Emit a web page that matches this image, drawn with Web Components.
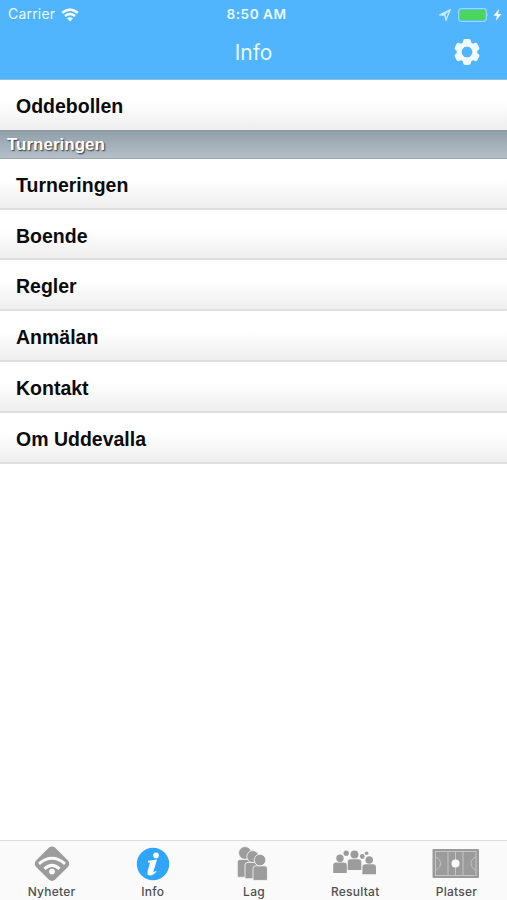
<!DOCTYPE html>
<html lang="sv">
<head>
<meta charset="utf-8">
<title>Info</title>
<style>
  html, body { margin: 0; height: 100%; background: #fff; overflow: hidden; }
</style>
</head>
<body>
<info-app></info-app>
<script>
(function() {

  /**
   * StatusBar component
   */
  class StatusBar extends HTMLElement {

    connectedCallback() {
      const html = `
        <style>
          :host { display: grid; grid-template-columns: 1fr auto 1fr; align-items: center; height: 27px; padding: 0 5px 0 8px; box-sizing: border-box; font: 500 13.2px/29px Inter, sans-serif; color: #e9f9ff; }
          .left, .right { display: flex; align-items: center; height: 27px; }
          .carrier { font-weight: 400; font-size: 13.9px; letter-spacing: 0.25px; }
          .time { font-weight: 600; font-size: 13.6px; letter-spacing: 0.5px; padding-left: 3px; }
          .right { justify-content: flex-end; }
          svg { display: block; }
          .wifi { margin-left: 6px; }
          .arrow { margin-right: 7px; }
          .bolt { margin-left: 4px; }
        </style>
        <div class="left">
          <span class="carrier">Carrier</span>
          <svg class="wifi" width="18" height="14" viewBox="0 0 18 14" fill="none" stroke="#f4fcff" stroke-width="2.5">
            <path d="M1.2 4.8Q9-1.6 16.8 4.8M4 8Q9 3.9 14 8"/>
            <path d="M6 10.3Q9 8.1 12 10.3L9 13.4Z" fill="#f4fcff" stroke="none"/>
          </svg>
        </div>
        <span class="time">8:50 AM</span>
        <div class="right">
          <svg class="arrow" width="12" height="12" viewBox="0 0 12 12">
            <path d="M11 1L1 5.8L5.8 6.2L7 11Z" fill="none" stroke="#c6eaff" stroke-width="1.4"/>
            <path d="M11 1L1 5.8L5.8 6.2Z" fill="#c6eaff"/>
          </svg>
          <svg width="31" height="14" viewBox="0 0 31 14">
            <rect x=".7" y=".7" width="27.6" height="12.6" rx="2.5" fill="none" stroke="#9ad8fc" stroke-width="1.2"/>
            <rect x="2" y="2" width="25" height="10" rx="1" fill="#4bd661"/>
            <path d="M29.4 5Q30.8 7 29.4 9Z" fill="#9ad8fc"/>
          </svg>
          <svg class="bolt" width="9" height="12" viewBox="0 0 9 12"><path d="M6 0L0.5 6.8H3.8L2.8 12L8.5 4.9H5.2Z" fill="#f4fcff"/></svg>
        </div>
      `;
      this.attachShadow({ mode: 'open' }).innerHTML = html;
    }
  }
  customElements.define('status-bar', StatusBar);

  /**
   * NavBar component, title in the default slot
   */
  class NavBar extends HTMLElement {

    connectedCallback() {
      let teeth = '';
      for (let i = 0; i < 6; i++) {
        teeth += `<rect x="-4" y="-13" width="8" height="8" rx="2.4" transform="rotate(${i * 60})"/>`;
      }
      const html = `
        <style>
          :host { display: grid; grid-template-columns: 1fr auto 1fr; align-items: center; height: 53px; padding: 0 26px; box-sizing: border-box; border-bottom: 1px solid #91bedb; font: 400 21px/50px Inter, sans-serif; letter-spacing: -0.1px; color: #e6f8ff; }
          .title { grid-column: 2; }
          svg { justify-self: end; display: block; margin-bottom: 2px; }
        </style>
        <span class="title"><slot></slot></span>
        <svg width="28" height="28" viewBox="-14 -14 28 28" fill="#f0faff">
          ${teeth}
          <circle r="7.9" fill="none" stroke="#f0faff" stroke-width="5"/>
          <circle r="5.2" fill="#50b5fc"/>
        </svg>
      `;
      this.attachShadow({ mode: 'open' }).innerHTML = html;
    }
  }
  customElements.define('nav-bar', NavBar);

  /**
   * ListRow component
   */
  class ListRow extends HTMLElement {

    connectedCallback() {
      const html = `
        <style>
          :host { display: flex; align-items: center; height: 51px; box-sizing: border-box; padding: 3px 16px 0; border-bottom: 2px solid #dfdfdf; background: linear-gradient(#fff 0%, #fff 42%, #eee 100%); font: bold 19.5px/24px "Liberation Sans", Arial, sans-serif; color: #0b0b0b; }
          :host([short]) { height: 50px; }
          :host([flush]) { border-bottom: 0; padding-top: 1px; }
        </style>
        <span><slot></slot></span>
      `;
      this.attachShadow({ mode: 'open' }).innerHTML = html;
    }
  }
  customElements.define('list-row', ListRow);

  /**
   * ListSection component
   */
  class ListSection extends HTMLElement {

    connectedCallback() {
      const html = `
        <style>
          :host { display: flex; align-items: center; height: 29px; box-sizing: border-box; padding: 0 7px; border-top: 1px solid #8b969e; border-bottom: 1px solid #9da5aa; background: linear-gradient(#909fa9, #b5c0c8); font: bold 17px/24px "Liberation Sans", Arial, sans-serif; color: #fff; text-shadow: 1px 1px 1.5px #333; }
        </style>
        <span><slot></slot></span>
      `;
      this.attachShadow({ mode: 'open' }).innerHTML = html;
    }
  }
  customElements.define('list-section', ListSection);

  // head at x, y with radius r, shoulders from top to bottom
  const person = (x, y, r, top, bottom) => `
    <path d="M${x - 6.8} ${bottom}V${top + 3}q0-3 3-3h7.6q3 0 3 3V${bottom}Z"/>
    <circle cx="${x}" cy="${y}" r="${r}"/>`;

  const icons = {
    news: `
      <rect x="-13.5" y="-13.5" width="27" height="27" rx="4.5" transform="translate(24 17.7) rotate(45)"/>
      <g fill="none" stroke="#fafafa" stroke-width="3"><path d="M11 17.8Q24 6.8 37 17.8M16.5 22.8Q24 16 31.5 22.8"/></g>
      <circle cx="24" cy="25.6" r="2.9" fill="#fafafa"/>`,
    info: `
      <circle cx="24" cy="18" r="16.2" fill="#2fa6fa"/>
      <circle cx="27" cy="9.4" r="2.8" fill="#fff"/>
      <path d="M19.2 14.8L28 13.5L24.4 25.8Q24.6 26.7 26.8 24.8L27.6 25.8Q22.8 30.6 19.4 29Q17.8 28 18.6 25.3L21 16.6L18.8 16.4Z" fill="#fff"/>`,
    teams: `<g stroke="#fafafa" stroke-width=".8">
      <path d="M7.3 31.3V16Q7.3 13.4 10 13.4H19Q22 13.4 22 16V31.3Z"/><circle cx="15" cy="7" r="6.4"/>
      <path d="M15 32.8V19Q15 16.4 18 16.4H27Q30 16.4 30 19V32.8Z"/><circle cx="22.8" cy="10.6" r="6"/>
      <path d="M23 34.4V22.5Q23 19.8 26 19.8H34.5Q37.4 19.8 37.4 22.5V34.4Z"/><circle cx="30" cy="14" r="5.8"/></g>`,
    results: person(9, 12.2, 3.7, 16.4, 27) + person(23.5, 8.4, 4, 13.3, 24) + person(38.2, 14, 3.8, 18.2, 28.2) + `
      <circle cx="15.2" cy="7.2" r="2.7"/><circle cx="31.3" cy="10.5" r="2.4"/><circle cx="35.6" cy="7.2" r="1.8"/>`,
    places: `
      <rect x=".5" y="3" width="46.5" height="29" rx="1" fill="#9b9b9b"/>
      <g fill="none" stroke="#c4c4c4" stroke-width="1"><rect x="3.5" y="5.5" width="40.5" height="24"/><path d="M16 5.5V29.5M23.5 5.5V29.5M31 5.5V29.5M3.5 11Q8.5 13 8.5 17.5Q8.5 22 3.5 24M44 11Q39 13 39 17.5Q39 22 44 24"/></g>
      <circle cx="23.5" cy="17.5" r="4" fill="#fff"/>`
  };

  /**
   * TabItem component, label in the default slot
   */
  class TabItem extends HTMLElement {

    connectedCallback() {
      const html = `
        <style>
          :host { display: flex; flex: 1; flex-direction: column; align-items: center; padding-top: 5px; font: 500 12px/15px Inter, sans-serif; letter-spacing: 0.25px; color: #505050; }
          svg { display: block; margin-bottom: 2px; }
        </style>
        <svg width="48" height="36" viewBox="0 0 48 36" fill="#9c9c9c">${icons[this.getAttribute('icon')]}</svg>
        <span><slot></slot></span>
      `;
      this.attachShadow({ mode: 'open' }).innerHTML = html;
    }
  }
  customElements.define('tab-item', TabItem);

  /**
   * InfoApp component
   * @container
   */
  class InfoApp extends HTMLElement {

    connectedCallback() {
      const html = `
        <style>
          :host { display: flex; flex-direction: column; height: 100vh; background: #fff; }
          header { background: #50b5fc; }
          main { flex: 1; }
          nav { display: flex; height: 60px; box-sizing: border-box; padding-left: 1px; border-top: 1px solid #dcdcdc; background: #fafafa; }
        </style>
        <header>
          <status-bar></status-bar>
          <nav-bar>Info</nav-bar>
        </header>
        <main>
          <list-row short flush>Oddebollen</list-row>
          <list-section>Turneringen</list-section>
          <list-row>Turneringen</list-row>
          <list-row short>Boende</list-row>
          <list-row>Regler</list-row>
          <list-row>Anmälan</list-row>
          <list-row>Kontakt</list-row>
          <list-row>Om Uddevalla</list-row>
        </main>
        <nav>
          <tab-item icon="news">Nyheter</tab-item>
          <tab-item icon="info">Info</tab-item>
          <tab-item icon="teams">Lag</tab-item>
          <tab-item icon="results">Resultat</tab-item>
          <tab-item icon="places">Platser</tab-item>
        </nav>
      `;
      this.attachShadow({ mode: 'open' }).innerHTML = html;
    }
  }
  customElements.define('info-app', InfoApp);
})();
</script>
</body>
</html>
